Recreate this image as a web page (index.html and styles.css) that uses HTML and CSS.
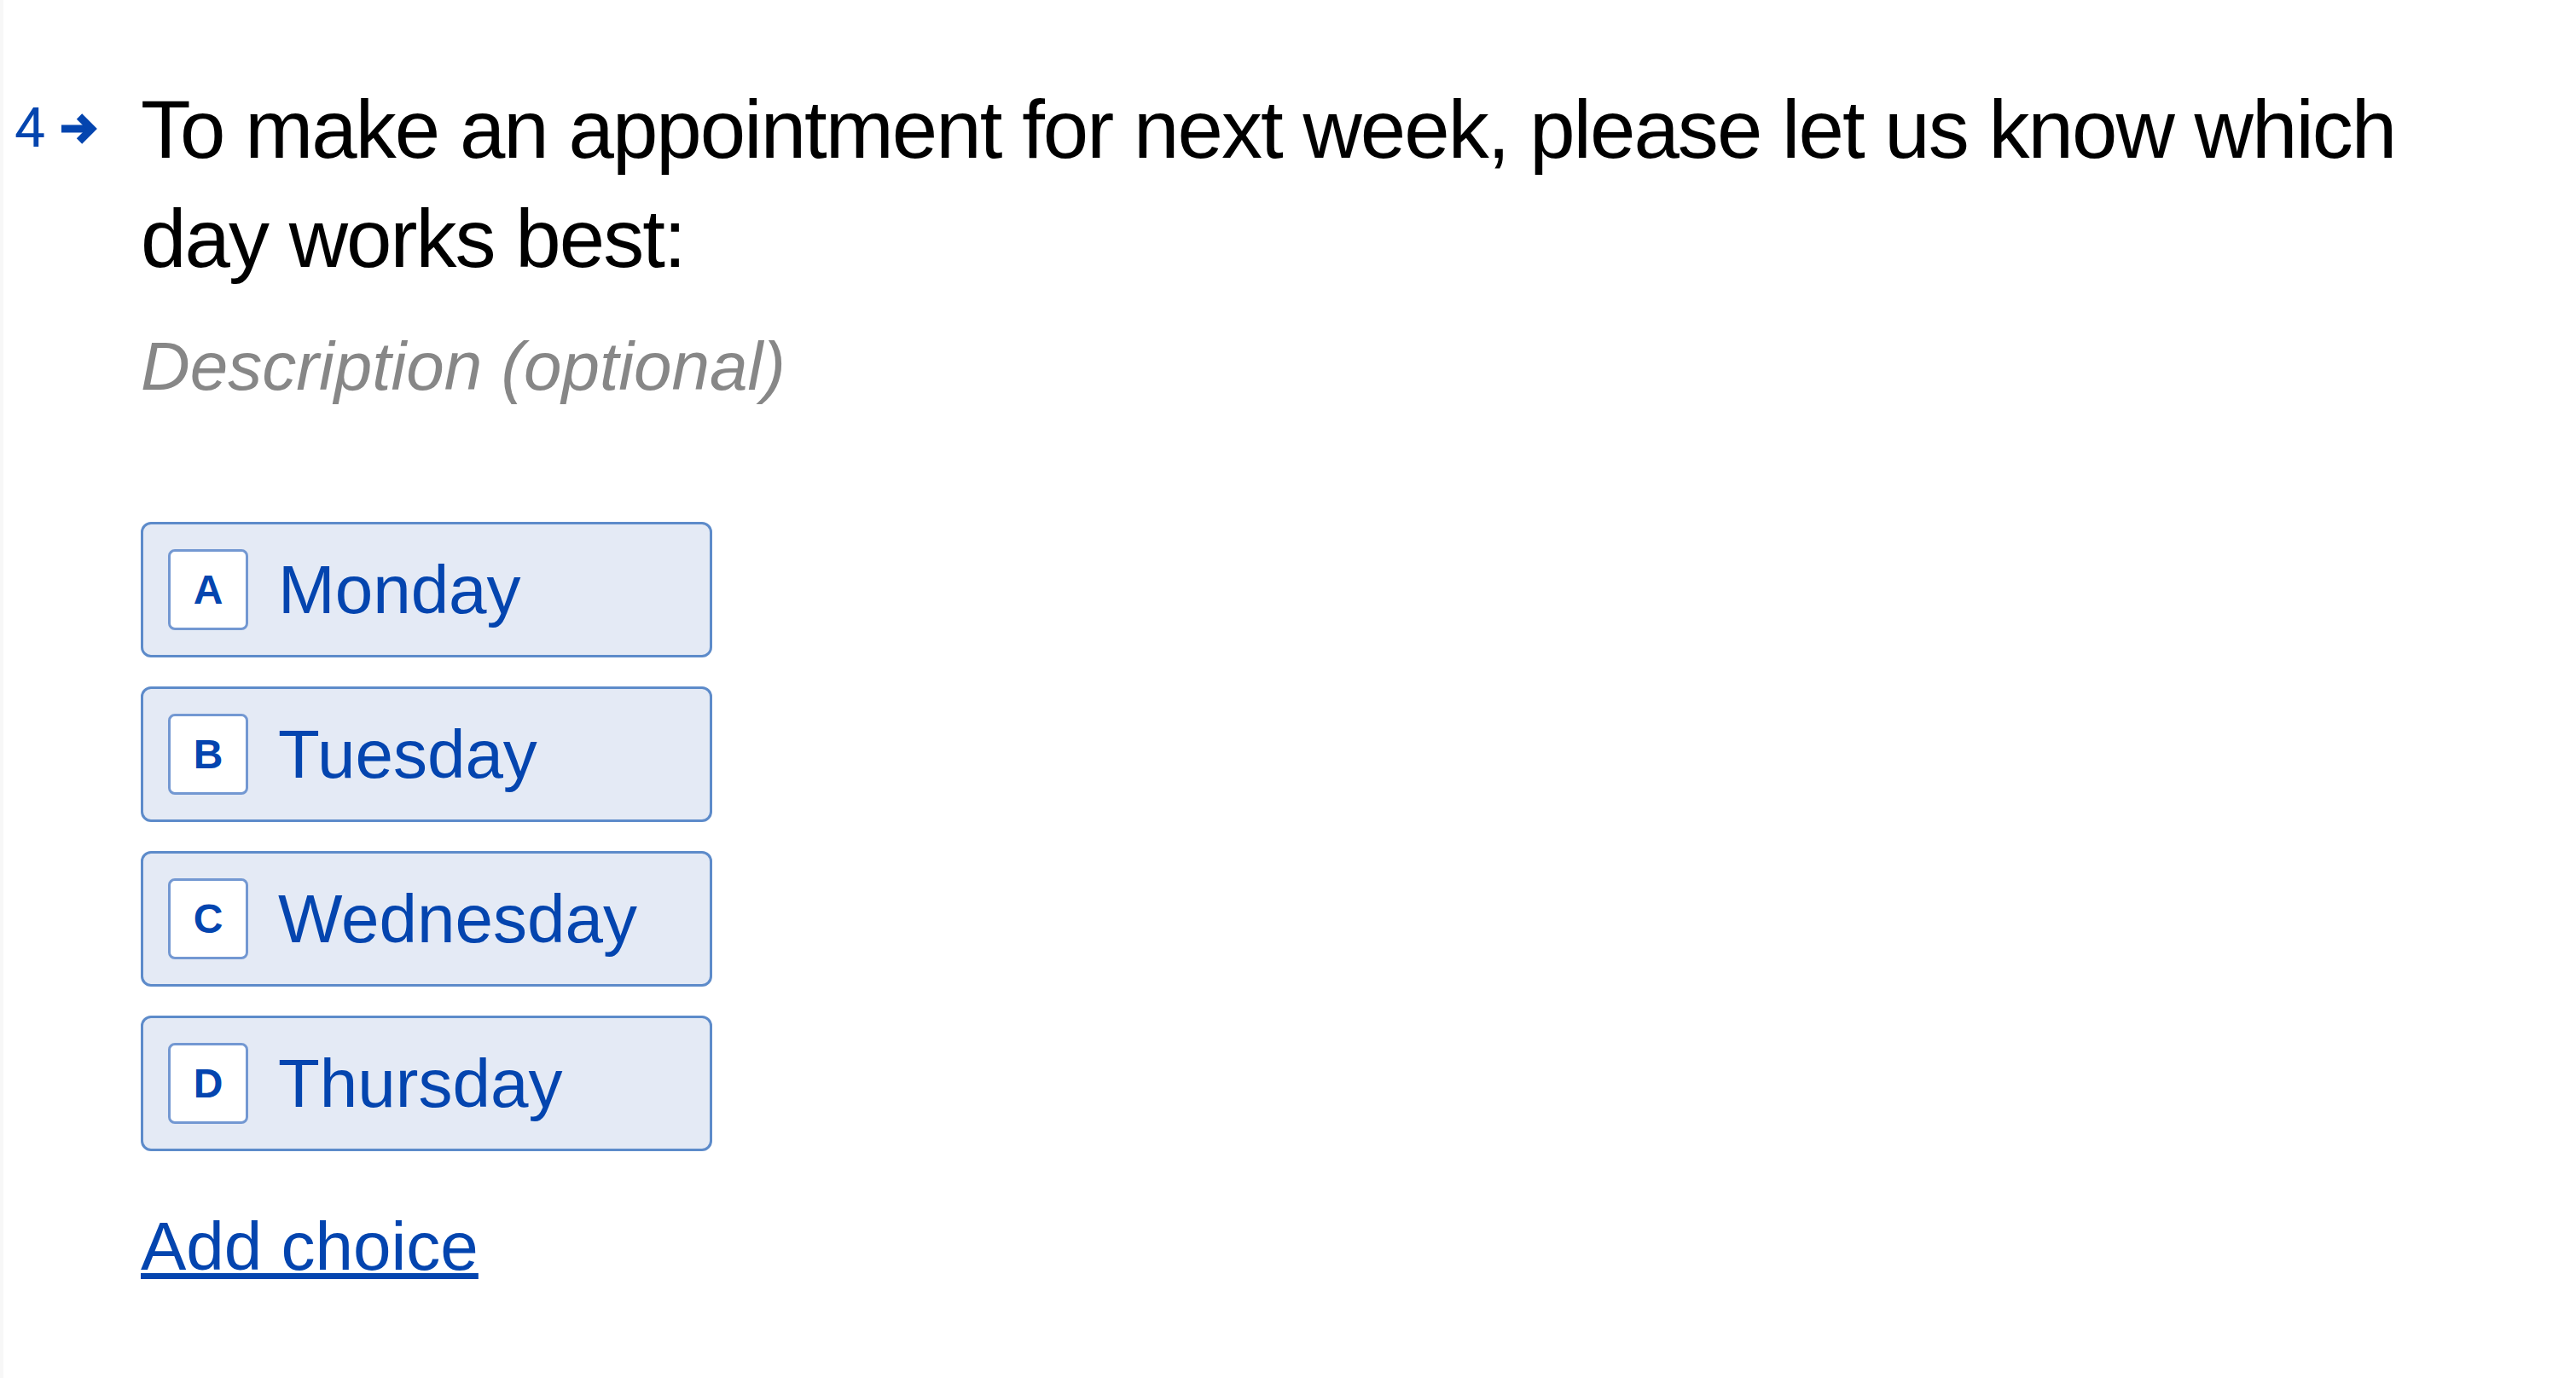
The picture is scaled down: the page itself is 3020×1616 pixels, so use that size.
FILE: index.html
```html
<!DOCTYPE html>
<html lang="en">
<head>
<meta charset="utf-8">
<title>Question 4</title>
<link rel="stylesheet" href="styles.css">
</head>
<body>
<main class="page">
  <section class="question">
    <div class="qnum">
      <span class="num">4</span>
      <svg class="arrow" width="42" height="38" viewBox="0 0 42 38" aria-hidden="true">
        <path d="M0 19 H34" fill="none" stroke="#0445af" stroke-width="9"/>
        <path d="M21 4.5 L35.5 19 L21 33.5" fill="none" stroke="#0445af" stroke-width="9" stroke-linejoin="miter"/>
      </svg>
    </div>
    <div class="qbody">
      <h1 class="title">To make an appointment for next week, please let us know which day works best:</h1>
      <p class="desc">Description (optional)</p>
      <ul class="choices">
        <li class="choice"><span class="key">A</span><span class="label">Monday</span></li>
        <li class="choice"><span class="key">B</span><span class="label">Tuesday</span></li>
        <li class="choice"><span class="key">C</span><span class="label">Wednesday</span></li>
        <li class="choice"><span class="key">D</span><span class="label">Thursday</span></li>
      </ul>
      <div class="add-row"><a class="add" href="#">Add choice</a></div>
    </div>
  </section>
</main>
</body>
</html>
```

FILE: styles.css
```css
html, body {
  margin: 0;
  padding: 0;
  background: #ffffff;
}

body {
  font-family: "Liberation Sans", Arial, Helvetica, sans-serif;
  color: #000000;
}

.page {
  box-sizing: border-box;
  min-height: 100vh;
  border-left: 4px solid #f7f7f7;
  padding-top: 88px;
}

.question {
  display: grid;
  grid-template-columns: 161px 1fr;
}

.qnum {
  display: flex;
  align-items: center;
  gap: 19px;
  padding-top: 31px;
  padding-left: 13px;
  align-self: start;
}

.num {
  font-family: Roboto, "Liberation Sans", sans-serif;
  font-weight: 400;
  font-size: 64px;
  line-height: 63px;
  color: #0445af;
}

.arrow {
  display: block;
  flex: none;
}

.qbody {
  min-width: 0;
}

.title {
  margin: 0;
  max-width: 2720px;
  font-size: 96px;
  line-height: 128px;
  font-weight: 400;
  letter-spacing: -1.95px;
  color: #000000;
}

.desc {
  margin: 32px 0 0;
  font-size: 80px;
  line-height: 107px;
  font-style: italic;
  color: #878787;
}

.choices {
  list-style: none;
  margin: 129px 0 0;
  padding: 0;
  display: flex;
  flex-direction: column;
  align-items: flex-start;
  gap: 34px;
}

.choice {
  box-sizing: border-box;
  width: 670px;
  height: 159px;
  display: flex;
  align-items: center;
  gap: 35px;
  padding: 0 29px;
  border: 3px solid #5d8bca;
  border-radius: 12px;
  background: #e4eaf5;
}

.key {
  box-sizing: border-box;
  flex: none;
  width: 94px;
  height: 95px;
  display: flex;
  align-items: center;
  justify-content: center;
  border: 3px solid #7398d2;
  border-radius: 8px;
  background: #ffffff;
  font-size: 48px;
  font-weight: 700;
  color: #0445af;
}

.label {
  font-size: 80px;
  color: #0445af;
  white-space: nowrap;
}

.add-row {
  margin-top: 58px;
}

.add {
  font-size: 80px;
  line-height: 107px;
  color: #0445af;
  text-decoration: underline;
  text-decoration-thickness: 7px;
  text-underline-offset: 4px;
}
```
